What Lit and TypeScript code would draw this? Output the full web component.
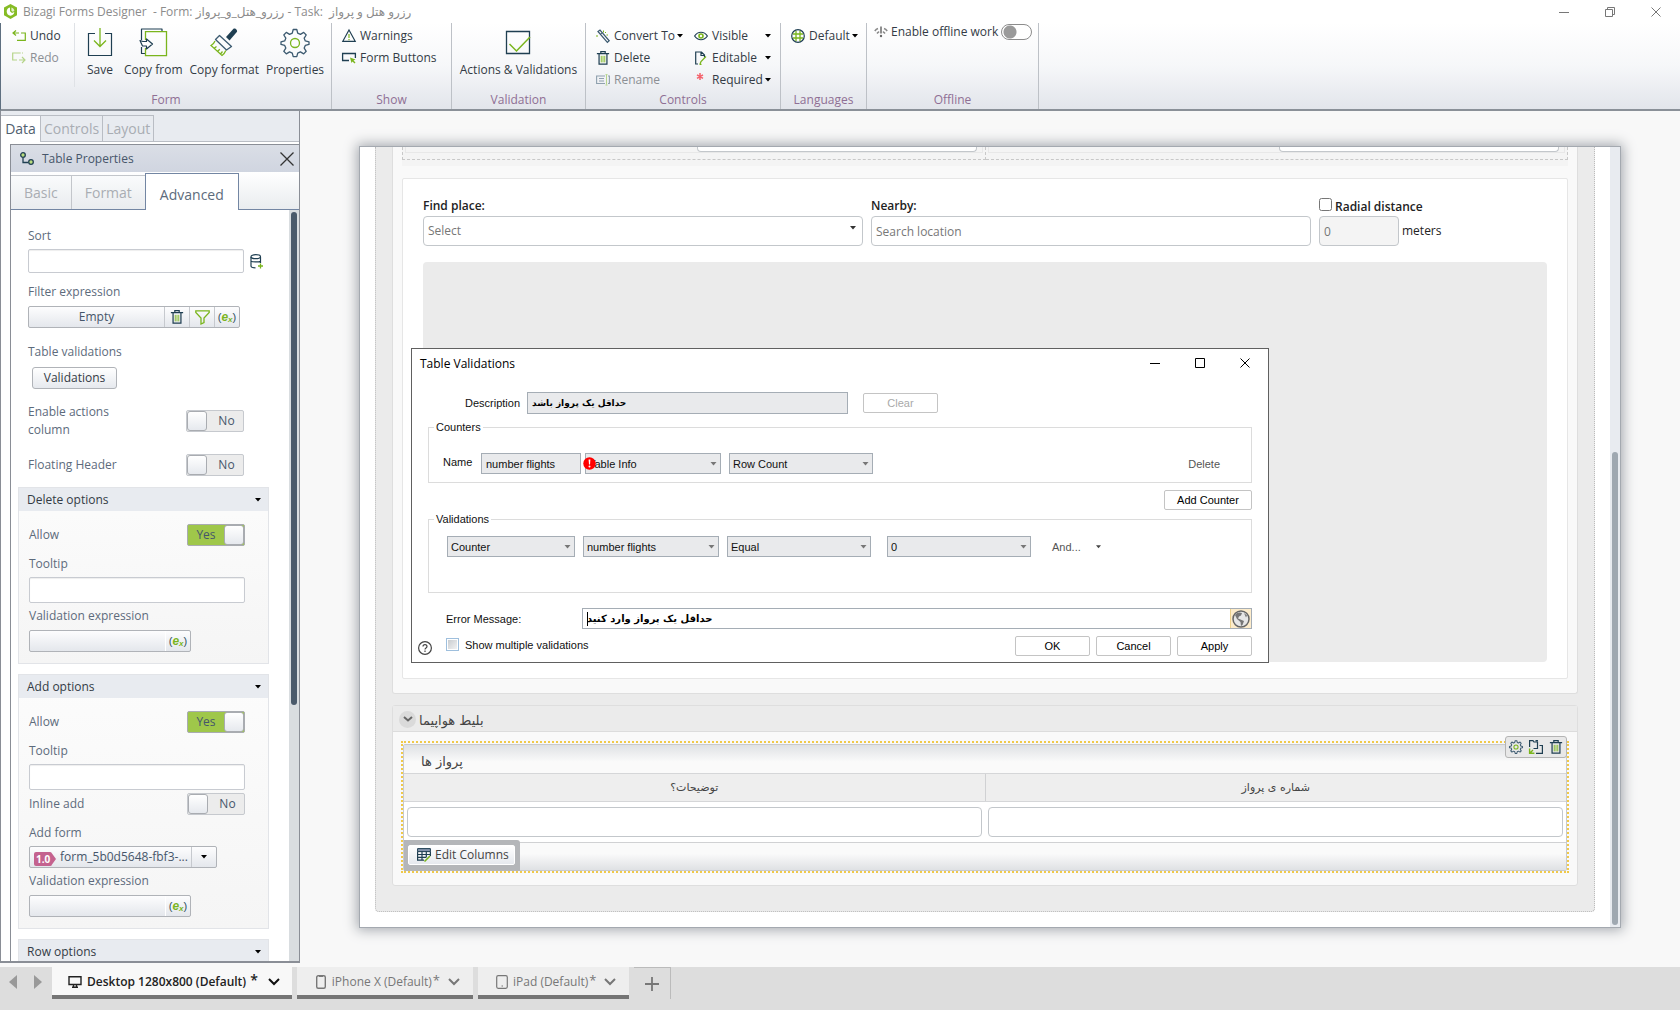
import { LitElement, html, svg, css, nothing } from "lit";
import { customElement } from "lit/decorators.js";

/* ---------- shared styles ---------- */

const base = css`
  *, *::before, *::after { box-sizing: border-box; }
  :host {
    display: block;
    font: 12px/18px "Open Sans", "Noto Sans", "DejaVu Sans", sans-serif;
    color: #333b45;
  }
  button, input, select { font: inherit; color: inherit; margin: 0; border-radius: 0; }
  button { background: none; border: 0; padding: 0; white-space: nowrap; }
  svg { display: block; flex: none; fill: none; overflow: visible; }
`;

/* ---------- icons ---------- */

const NAVY = "#1f3f52";
const GREEN = "#7ab51d";

const caret = (color = "#000", w = 6) => html`
  <svg width=${w} height="4" viewBox="0 0 6 4" aria-hidden="true"><path d="M0 0h6L3 3.6z" fill=${color} /></svg>`;

const trash = (size = 16) => html`
  <svg width=${size} height=${size} viewBox="0 0 16 16" aria-hidden="true">
    <path d="M5.500 2.500V.7h5v1.800M1 3h14M3.500 3v12h9V3" stroke=${NAVY} stroke-width="1.400" />
    <path d="M6 5.500v7.500M8 5.500v7.500M10 5.500v7.500" stroke=${GREEN} />
  </svg>`;

const GEAR = "M13.200 1.500h3.600l.9 3.700 2.700 1.200 3.300-2 2.500 2.600-2 3.200 1.100 2.700 3.700.9v2.600l-3.700 1-1.100 2.700 2 3.200-2.500 2.600-3.300-2-2.700 1.200-.9 3.600h-3.600l-.9-3.600-2.700-1.200-3.300 2-2.500-2.600 2-3.200-1.100-2.700-3.700-1v-2.600l3.700-.9 1.100-2.700-2-3.200 2.500-2.600 3.300 2 2.700-1.200z";

const gear = (size: number, width: number) => html`
  <svg width=${size} height=${size} viewBox="0 0 30 30" aria-hidden="true">
    <path d=${GEAR} stroke="#3c5a70" stroke-width=${width} stroke-linejoin="round" />
    <circle cx="15" cy="15" r="4.500" stroke=${GREEN} stroke-width=${width} />
  </svg>`;

const chevron = (color: string) => html`
  <svg width="12" height="8" viewBox="0 0 12 8" aria-hidden="true"><path d="M1 1l5 5 5-5" stroke=${color} stroke-width="2" /></svg>`;

const icons = {
  logo: html`<svg width="13" height="15" viewBox="0 0 13 15" aria-hidden="true">
    <path d="M6.500 0L13 3.600v7.600L6.500 15 0 11.200V3.600z" fill="#86bc25" />
    <path d="M6 3.400C3.700 3.900 2.700 5.600 2.700 7.600c0 2.300 1.600 4.100 3.800 4.100 2.100 0 3.600-1.500 3.800-3.600L8 9 6 7.200z" fill="#fff" />
    <path d="M7.400 3.400v3.300l1.200 1 1.800-.8c-.2-1.900-1.300-3.200-3-3.500z" fill="#fff" opacity=".75" /></svg>`,
  undo: html`<svg width="14" height="12" viewBox="0 0 14 12" aria-hidden="true">
    <path d="M4 .5L1 3l3 2.500M1 3h6M9 3h4.300v7.300H5" stroke=${GREEN} stroke-width="1.200" /></svg>`,
  redo: html`<svg width="14" height="12" viewBox="0 0 14 12" aria-hidden="true">
    <path d="M10 5l3 3-3 3M13 8H7M5 8H.7V1h8M10 1h1" stroke="#b5d48a" stroke-width="1.200" /></svg>`,
  save: html`<svg width="28" height="30" viewBox="0 0 28 30" aria-hidden="true">
    <path d="M9 5.500H2.500v22h23v-22H19" stroke=${NAVY} stroke-width="1.200" />
    <path d="M14 0v18M8 12.500l6 6 6-6" stroke=${GREEN} stroke-width="1.300" /></svg>`,
  copyFrom: html`<svg width="28" height="30" viewBox="0 0 28 30" aria-hidden="true">
    <path d="M23 4V1H2.500v11M2.500 19v6.500H6" stroke=${NAVY} stroke-width="1.200" stroke-linejoin="round" />
    <path d="M6.500 12V3.600h21v24h-21V20" stroke=${GREEN} stroke-width="1.300" />
    <path d="M1 12.500l2.500 5.500h4v3l6-5-6-5v2.500H4z" stroke=${NAVY} stroke-width="1.200" stroke-linejoin="round" fill="#fff" /></svg>`,
  brush: html`<svg width="28" height="30" viewBox="0 0 28 30" aria-hidden="true">
    <path d="M16 9L23.500.8c1.500-1.300 4.500 1.500 3.300 3.200L19.500 12.500z" fill=${NAVY} />
    <path d="M9.500 7.500l12 11-5 3.500L5.500 11.500z" stroke="#3c5a70" stroke-width="1.300" stroke-linejoin="round" />
    <path d="M5 13c-.8 2-2 3.500-4 4.500l11 10c1.500-1 3-3 3.800-5M4 20.500l2.500-2M7.500 23.500l2.300-2.300M10.500 26l2-2.500" stroke=${GREEN} stroke-width="1.300" /></svg>`,
  warning: html`<svg width="14" height="14" viewBox="0 0 14 14" aria-hidden="true">
    <path d="M7 1L13.200 12.300H.8z" stroke=${NAVY} stroke-width="1.200" />
    <path d="M7 5v4M7 10v1.300" stroke=${GREEN} stroke-width="1.200" /></svg>`,
  formButton: html`<svg width="14" height="12" viewBox="0 0 14 12" aria-hidden="true">
    <path d="M7 8.500H.6v-7h12.800V6" stroke=${NAVY} stroke-width="1.300" />
    <path d="M8 5.500l5.500 2-2 1 2 2-1 1-2-2-1 1.500z" fill=${GREEN} /></svg>`,
  check: html`<svg width="28" height="30" viewBox="0 0 28 30" aria-hidden="true">
    <path d="M2.500 3.500h23v22h-23z" stroke=${NAVY} stroke-width="1.300" />
    <path d="M5.500 16l7 7L26 9" stroke=${GREEN} stroke-width="1.500" /></svg>`,
  wand: html`<svg width="14" height="14" viewBox="0 0 14 14" aria-hidden="true">
    <path d="M2 2.500l2-1.500 9.200 10.800-1.800 1.500z" stroke="#3c5a70" stroke-width="1.200" />
    <path d="M4 5.500l2-1.500" stroke="#3c5a70" />
    <path d="M7.500 1.500v2M10 3l-1 1M1 6v2M10.500 6h1.500" stroke=${GREEN} /></svg>`,
  rename: html`<svg width="14" height="12" viewBox="0 0 14 12" aria-hidden="true">
    <path d="M9 2H.6v7.500H9M12 2h1.400v7.500H12M3 4.500h5M3 7h5" stroke="#8fa0ae" stroke-width="1.100" />
    <path d="M10.500 1v9.500M9.500.6h2M9.500 11h2" stroke="#b5d48a" /></svg>`,
  eye: html`<svg width="14" height="12" viewBox="0 0 14 12" aria-hidden="true">
    <path d="M.6 6C4 1 10 1 13.400 6 10 11 4 11 .6 6z" stroke=${NAVY} stroke-width="1.200" />
    <circle cx="7" cy="6" r="2" stroke=${GREEN} stroke-width="1.600" /></svg>`,
  edit: html`<svg width="14" height="14" viewBox="0 0 14 14" aria-hidden="true">
    <path d="M4 13H1.700V1H7.500l3 3v2.500M7 1v3.500h3.500" stroke=${NAVY} stroke-width="1.200" />
    <path d="M6 13l1-2.500 5-5M5.500 13.300h2" stroke=${GREEN} stroke-width="1.300" /></svg>`,
  star: html`<svg width="14" height="14" viewBox="0 0 14 14" aria-hidden="true">
    <path d="M6 0v7M3 1.800l6 3.500M9 1.800L3 5.300" stroke="#f4616b" stroke-width="1.500" /></svg>`,
  globe: html`<svg width="14" height="14" viewBox="0 0 14 14" aria-hidden="true">
    <circle cx="7" cy="7" r="6.300" stroke=${NAVY} stroke-width="1.200" />
    <path d="M5 2v10M9 2v10M2 5h10M2 9h10" stroke=${GREEN} stroke-width="1.300" /></svg>`,
  offline: html`<svg width="14" height="12" viewBox="0 0 14 12" aria-hidden="true">
    <path d="M.8 5c1-1.300 2-2 3.200-2.400M3 7.500C3.700 6.600 4.400 6 5.200 5.800M10 2.600c1.200.4 2.200 1.100 3.200 2.400M8.800 5.800c.8.2 1.500.8 2.200 1.700" stroke="#8a8a8a" stroke-width="1.600" />
    <path d="M7 .5v7" stroke="#6a6a6a" stroke-width="1.500" /><circle cx="7" cy="10" r="1.200" fill="#6a6a6a" /></svg>`,
  relation: html`<svg width="14" height="14" viewBox="0 0 14 14" aria-hidden="true">
    <circle cx="3" cy="3" r="2.300" stroke=${NAVY} stroke-width="1.300" fill="#b9dc7e" />
    <circle cx="11" cy="10" r="2.300" stroke=${NAVY} stroke-width="1.300" fill="#b9dc7e" />
    <path d="M3 6v4.500h5" stroke=${NAVY} stroke-width="1.300" /></svg>`,
  database: html`<svg width="14" height="15" viewBox="0 0 14 15" aria-hidden="true">
    <path d="M1 3v9c0 1 2 1.800 4.500 1.800M10.500 3v6M1 7.200c1 1 8 1 9.500 0" stroke=${NAVY} stroke-width="1.200" />
    <ellipse cx="5.750" cy="2.700" rx="4.750" ry="2" stroke=${NAVY} stroke-width="1.200" />
    <path d="M10.500 9.500v5M8 12h5" stroke=${GREEN} stroke-width="1.300" /></svg>`,
  funnel: html`<svg width="15" height="15" viewBox="0 0 15 15" aria-hidden="true">
    <path d="M.8.8h13.400v1.700L9 8v4.500l-3 1.500V8L.8 2.500z" stroke=${GREEN} stroke-width="1.300" /></svg>`,
  reorder: html`<svg width="14" height="14" viewBox="0 0 14 14" aria-hidden="true">
    <path d="M.6 7V.6H4L5 2h3.500v6.500H4.500M6.500.6h2.500M11 5.500h2.400v7.800H7M11 5.500h-.5" stroke=${NAVY} stroke-width="1.200" />
    <path d="M.6 8.500v4.800h4.800M1 13l3-3" stroke=${GREEN} stroke-width="1.400" /></svg>`,
  columns: html`<svg width="14" height="14" viewBox="0 0 14 14" aria-hidden="true">
    <path d="M.6.6h12.800v3H.6z" fill="#8494ad" stroke=${NAVY} />
    <path d="M.6 3.600v8.500H7M.6 6.500h12.800M.6 9.400H9M5 3.600v8.500M9.300 3.600v6M13.400 3.600V8" stroke=${NAVY} stroke-width="1.200" />
    <path d="M7.500 13.500L13 8" stroke=${GREEN} stroke-width="1.600" /></svg>`,
  close: html`<svg width="14" height="14" viewBox="0 0 14 14" aria-hidden="true">
    <path d="M.5.5l13 13M13.500.5l-13 13" stroke="#333" stroke-width="1.300" /></svg>`,
};

const windowGlyph = (kind: "min" | "max" | "restore" | "close") => {
  const paths = {
    min: svg`<path d="M0 5.500h10" />`,
    max: svg`<path d="M.5.5h9v9h-9z" />`,
    restore: svg`<path d="M.5 2.500h7v7h-7zM2.500 2.500v-2h7v7h-2" />`,
    close: svg`<path d="M.5.5l9 9M9.500.5l-9 9" />`,
  };
  return html`<svg width="10" height="10" viewBox="0 0 10 10" stroke="currentColor" aria-hidden="true">${paths[kind]}</svg>`;
};

/* ---------- title bar ---------- */

@customElement("title-bar")
class TitleBar extends LitElement {
  static styles = [base, css`
    .bar { display: flex; align-items: center; height: 23px; padding-right: 1px; color: #8c8c8c; background: #fff; }
    .logo { padding: 0 6px 0 4px; }
    .title { flex: 1; white-space: pre; font-size: 12px; }
    .win { display: grid; place-items: center; width: 46px; height: 20px; color: #777; }
  `];
  render() {
    return html`<header class="bar">
      <span class="logo">${icons.logo}</span>
      <span class="title"><bdi>Bizagi Forms Designer  - Form: </bdi><bdi>رزرو_هتل_و_پرواز</bdi><bdi> - Task:  </bdi><bdi>رزرو هتل و پرواز</bdi></span>
      <button class="win" aria-label="Minimize">${windowGlyph("min")}</button>
      <button class="win" aria-label="Restore">${windowGlyph("restore")}</button>
      <button class="win" aria-label="Close">${windowGlyph("close")}</button>
    </header>`;
  }
}

/* ---------- ribbon ---------- */

@customElement("ribbon-bar")
class RibbonBar extends LitElement {
  static styles = [base, css`
    .ribbon {
      display: flex; height: 88px;
      border-left: 1px solid #5e6f80; border-bottom: 2px solid #8a9098;
      background: linear-gradient(#fff, #f6f7f9 50%, #e2e5eb);
    }
    .group { display: flex; flex-direction: column; border-right: 1px solid #bdc1c7; }
    .tools { display: flex; flex: 1; }
    .caption { height: 18px; text-align: center; color: #8f6f94; }
    .col { display: flex; flex-direction: column; padding-top: 2px; }
    .small { display: flex; align-items: center; gap: 4px; height: 22px; }
    .small svg:last-child:not(:first-child) { margin-left: -2px; }
    .name { flex: 1; text-align: left; }
    .big { display: flex; flex-direction: column; align-items: center; gap: 3px; min-width: 34px; padding-top: 5px; }
    .off { color: #8c8f94; }
    .rule { width: 1px; margin-bottom: 4px; background: #dfe2e6; }
    .form { width: 331px; }
    .form .col { width: 73px; padding-left: 11px; }
    .bigs { display: flex; flex: 1; gap: 7px; padding-left: 8px; }
    .show { width: 120px; }
    .show .col { padding-left: 10px; }
    .validation { width: 134px; }
    .validation .tools { justify-content: center; }
    .controls { width: 195px; }
    .controls .col { padding: 2px 6px 0 10px; }
    .controls .rule + .col { padding: 2px 13px 0 8px; flex: 1; }
    .first { width: 100px; }
    .languages { width: 86px; }
    .languages .col { padding-left: 10px; }
    .offline { width: 172px; }
    .work { display: flex; align-items: center; gap: 3px; height: 18px; padding-left: 7px; white-space: nowrap; }
    .toggle {
      appearance: none; width: 31px; height: 16px; border: 1px solid #8c8c8c; border-radius: 8px;
      background: radial-gradient(circle at 8px 7px, #9a9a9a 6px, transparent 7px) #fff;
    }
  `];

  small(icon: unknown, name: string, drop = false, off = false) {
    return html`<button class="small ${off ? "off" : ""}">${icon}<span class="name">${name}</span>${drop ? caret() : nothing}</button>`;
  }
  big(icon: unknown, name: string) {
    return html`<button class="big">${icon}<span>${name}</span></button>`;
  }

  render() {
    return html`<nav class="ribbon" aria-label="Ribbon">
      <section class="group form">
        <div class="tools">
          <div class="col">${this.small(icons.undo, "Undo")}${this.small(icons.redo, "Redo", false, true)}</div>
          <span class="rule"></span>
          <div class="bigs">
            ${this.big(icons.save, "Save")}${this.big(icons.copyFrom, "Copy from")}
            ${this.big(icons.brush, "Copy format")}${this.big(gear(30, 1.3), "Properties")}
          </div>
        </div>
        <div class="caption">Form</div>
      </section>
      <section class="group show">
        <div class="tools"><div class="col">${this.small(icons.warning, "Warnings")}${this.small(icons.formButton, "Form Buttons")}</div></div>
        <div class="caption">Show</div>
      </section>
      <section class="group validation">
        <div class="tools">${this.big(icons.check, "Actions & Validations")}</div>
        <div class="caption">Validation</div>
      </section>
      <section class="group controls">
        <div class="tools">
          <div class="col first">
            ${this.small(icons.wand, "Convert To", true)}${this.small(trash(14), "Delete")}${this.small(icons.rename, "Rename", false, true)}
          </div>
          <span class="rule"></span>
          <div class="col">
            ${this.small(icons.eye, "Visible", true)}${this.small(icons.edit, "Editable", true)}${this.small(icons.star, "Required", true)}
          </div>
        </div>
        <div class="caption">Controls</div>
      </section>
      <section class="group languages">
        <div class="tools"><div class="col">${this.small(icons.globe, "Default", true)}</div></div>
        <div class="caption">Languages</div>
      </section>
      <section class="group offline">
        <div class="tools">
          <label class="work">${icons.offline}<span>Enable offline work</span><input class="toggle" type="checkbox" role="switch" /></label>
        </div>
        <div class="caption">Offline</div>
      </section>
    </nav>`;
  }
}

/* ---------- properties panel ---------- */

@customElement("properties-panel")
class PropertiesPanel extends LitElement {
  static styles = [base, css`
    :host { display: flex; flex-direction: column; color: #5d6b7c; background: #e8ebf0; border: solid #8a8e96; border-width: 0 1px 2px 1px; overflow: hidden; }
    .tabs { display: flex; height: 31px; padding-top: 4px; border-bottom: 1px solid #b9bdc4; font-size: 14px; background: #e8ebf0; flex: none; }
    .tab { height: 26px; padding: 0 3px; border: 1px solid #b9bdc4; border-left: 0; border-bottom: 0; color: #a9adb3; }
    .tab.on { height: 27px; width: 40px; padding: 0; color: #51606f; background: #fff; }
    .inner { flex: 1; display: flex; flex-direction: column; min-height: 0; border-left: 9px solid #fff; background: #fff; padding-top: 2px; }
    .frame { flex: 1; display: flex; flex-direction: column; min-height: 0; border-left: 1px solid #8a8e96; border-top: 1px solid #8a8e96; }
    .head { display: flex; align-items: center; height: 27px; padding: 0 5px 0 9px; gap: 8px; background: linear-gradient(#dadee6, #d0d5e0); color: #46566a; flex: none; }
    .head h2 { flex: 1; margin: 0; font: inherit; }
    .subtabs { display: flex; align-items: flex-end; height: 38px; font-size: 14px; background: linear-gradient(#fff, #e9ecef); border-bottom: 1px solid #7386a3; flex: none; }
    .sub { height: 34px; padding: 0 13px; border-right: 1px solid #c3c6cb; border-top: 1px solid #c3c6cb; color: #a9adb3; background: linear-gradient(#fafbfc, #e9ecef); }
    .sub:nth-child(2) { border-right: 0; }
    .sub.on { height: 37px; margin-bottom: -1px; padding: 5px 14px 0; border: 1px solid #7386a3; border-bottom: 0; background: #fff; color: #5d6b7c; }
    .scroll { flex: 1; min-height: 0; display: flex; overflow: hidden; }
    .content { flex: 1; min-width: 0; padding: 17px 20px 0 7px; overflow: hidden; }
    .track { width: 10px; background: #d9dde0; padding: 2px; flex: none; }
    .thumb { height: 66%; border-radius: 4px; background: #4a5a6b; }
    .general { padding: 0 25px 0 10px; }
    .lab { display: block; height: 18px; white-space: nowrap; }
    .text { display: block; width: 100%; height: 26px; border: 1px solid #c8cbd1; border-radius: 2px; background: #fff; box-shadow: inset 0 1px 1px #eee; }
    .pick { display: grid; grid-template-columns: 1fr 25px; align-items: center; justify-items: center; margin: 4px -25px 10px 0; }
    .pick .text { height: 24px; }
    .group { display: flex; height: 22px; border: 1px solid #b0b3b8; border-radius: 2px; background: linear-gradient(#fdfdfe, #e4e7ec); }
    .group button { display: grid; place-items: center; width: 25px; border-left: 1px solid #c6c9ce; }
    .group .wide { flex: 1; border: 0; color: #46566a; }
    .filter { width: 212px; margin: 5px 0 15px; }
    .expr { width: 162px; margin-top: 5px; }
    .expr button { border-left-color: #fff; }
    .plain { display: block; width: 85px; height: 22px; margin: 6px 0 14px 4px; border: 1px solid #b0b3b8; border-radius: 3px; background: linear-gradient(#fff, #e6e9ee); color: #333b45; }
    .row { display: flex; align-items: center; justify-content: space-between; min-height: 22px; }
    .two { width: 90px; }
    .gap { margin-top: 15px; }
    .switch {
      appearance: none; display: flex; align-items: center; width: 58px; height: 22px; margin: 0;
      border: 1px solid #c6c9ce; border-radius: 2px; background: #ececec; flex: none; color: #46566a;
    }
    .switch::before { content: ""; width: 20px; height: 20px; border: 1px solid #a9acb1; border-radius: 3px; background: linear-gradient(#fff, #e6e9ee); }
    .switch::after { content: "No"; flex: 1; padding-left: 3px; text-align: center; }
    .switch:checked { flex-direction: row-reverse; background: #9fc74a; border-color: #a9acb1; }
    .switch:checked::after { content: "Yes"; padding: 0; }
    .section { margin-top: 10px; border: 1px solid #e2e4e8; background: linear-gradient(#fcfcfc, #f5f5f5); }
    .general + .section { margin-top: 11px; }
    .bar { display: flex; align-items: center; justify-content: space-between; width: 100%; height: 23px; padding: 0 7px 0 8px; background: #e8ebf0; color: #333b45; }
    .body { padding: 13px 23px 11px 10px; }
    .tight { margin-top: 4px; }
    .space { margin-top: 9px; }
    .near { margin-top: 3px; }
    .combo { width: 188px; margin-top: 4px; color: #46566a; }
    .combo .wide { display: flex; align-items: center; gap: 4px; padding-left: 4px; min-width: 0; }
    .combo .wide span { overflow: hidden; text-overflow: ellipsis; }
    .ver { margin-top: 4px; }
    .ex { font: italic bold 12px/18px "Liberation Sans", sans-serif; color: #2f4f63; }
    .ex b { color: #7ab51d; }
    .ex sub { font-size: 8px; line-height: 8px; vertical-align: -1px; color: #7ab51d; }
    .ex i { font: 11px/18px "Liberation Sans", sans-serif; }
  `];

  ex = html`<span class="ex"><i>(</i><b>e</b><sub>x</sub><i>)</i></span>`;

  toggle(id: string, on: boolean) {
    return html`<input class="switch" id=${id} type="checkbox" role="switch" .checked=${on} />`;
  }
  expression(label: string) {
    return html`
      <span class="lab tight">${label}</span>
      <div class="group expr"><button class="wide" aria-label=${label}></button><button aria-label="Edit expression">${this.ex}</button></div>`;
  }
  options(key: string, title: string, extra: unknown = nothing) {
    return html`<section class="section">
      <button class="bar">${title}${caret()}</button>
      <div class="body">
        <div class="row"><label for="${key}-allow">Allow</label>${this.toggle(`${key}-allow`, true)}</div>
        <label class="lab space" for="${key}-tip">Tooltip</label>
        <input class="text tight" id="${key}-tip" type="text" />
        ${extra}
        ${this.expression("Validation expression")}
      </div>
    </section>`;
  }

  render() {
    return html`
      <div class="tabs"><button class="tab on">Data</button><button class="tab">Controls</button><button class="tab">Layout</button></div>
      <div class="inner"><div class="frame">
        <div class="head">${icons.relation}<h2>Table Properties</h2><button aria-label="Close panel">${icons.close}</button></div>
        <div class="subtabs"><button class="sub">Basic</button><button class="sub">Format</button><button class="sub on">Advanced</button></div>
        <div class="scroll">
          <div class="content">
            <div class="general">
              <label class="lab" for="sort">Sort</label>
              <div class="pick"><input class="text" id="sort" type="text" /><button aria-label="Pick attribute">${icons.database}</button></div>
              <span class="lab">Filter expression</span>
              <div class="group filter">
                <button class="wide">Empty</button>
                <button aria-label="Delete filter">${trash(14)}</button>
                <button aria-label="Edit filter">${icons.funnel}</button>
                <button aria-label="Edit expression">${this.ex}</button>
              </div>
              <span class="lab">Table validations</span>
              <button class="plain">Validations</button>
              <div class="row"><label class="two" for="actions">Enable actions column</label>${this.toggle("actions", false)}</div>
              <div class="row gap"><label for="floating">Floating Header</label>${this.toggle("floating", false)}</div>
            </div>
            ${this.options("delete", "Delete options")}
            ${this.options("add", "Add options", html`
              <div class="row near"><label for="inline">Inline add</label>${this.toggle("inline", false)}</div>
              <span class="lab space">Add form</span>
              <div class="group combo">
                <button class="wide">
                  <svg class="ver" width="22" height="14" viewBox="0 0 22 14" aria-hidden="true">
                    <path d="M2 0h14a2 2 0 0 1 2 1.500L22 7l-4 5.500a2 2 0 0 1-2 1.500H2a2 2 0 0 1-2-2V2a2 2 0 0 1 2-2z" fill="#c4628f" />
                    <text x="2" y="11" font-size="10" font-weight="700" fill="#fff">1.0</text>
                  </svg><span>form_5b0d5648-fbf3-...</span>
                </button>
                <button aria-label="Choose form">${caret()}</button>
              </div>`)}
            <section class="section"><button class="bar">Row options${caret()}</button></section>
          </div>
          <div class="track"><div class="thumb"></div></div>
        </div>
      </div></div>`;
  }
}

/* ---------- form canvas ---------- */

@customElement("form-canvas")
class FormCanvas extends LitElement {
  static styles = [base, css`
    :host { display: flex; padding: 35px 59px 39px; background: #f8f8f8; color: #222; }
    .page { flex: 1; min-width: 0; display: flex; border: 1px solid #a4a9b0; background: #fff; box-shadow: 0 0 12px 2px #a4a8ae; }
    .form { flex: 1; min-width: 0; display: flex; flex-direction: column; margin: 0 15px 15px; padding: 0 16px 25px; border: 1px dotted #bbb; border-top: 0; border-radius: 0 0 4px 4px; background: #ebebeb; }
    .track { width: 10px; display: flex; flex-direction: column; justify-content: flex-end; padding: 2px; background: #e8ebf0; }
    .thumb { height: 61%; border-radius: 3px; background: #9fa8b1; }
    .box { border: 1px solid #dedede; border-radius: 3px; background: #f9f9f9; }
    .first { flex: 1; display: flex; flex-direction: column; border-top: 0; border-radius: 0 0 3px 3px; padding: 0 9px 14px 9px; }
    .sliver { height: 19px; padding-bottom: 6px; background: #f4f4f4; display: grid; grid-template-columns: 583fr 582fr; }
    .cell { border: 1px dashed #c8c8c8; border-top: 0; display: flex; justify-content: flex-end; height: 13px; padding: 0 2px 0; }
    .cell + .cell { border-left: 0; }
    .slot { flex: 1; display: flex; justify-content: flex-end; height: 6px; border: 1px solid #e8e8e8; border-top: 0; padding-right: 5px; }
    .edge { width: 49%; height: 5px; border: 1px solid #c3c7cb; border-top: 0; border-radius: 0 0 4px 4px; background: #fff; }
    .card { flex: 1; display: flex; flex-direction: column; margin-top: 12px; padding: 18px 20px 16px 20px; border: 1px solid #e6e6e6; border-radius: 2px; background: #fff; }
    .fields { display: grid; grid-template-columns: 440fr 440fr 228fr; gap: 8px; }
    .lab { display: block; height: 19px; font-weight: 600; font-size: 12px; }
    .field { display: block; width: 100%; height: 30px; padding: 0 4px; border: 1px solid #c3c7cb; border-radius: 4px; background: #fff; color: #777; font-size: 12px; }
    .field::placeholder { color: #777; opacity: 1; }
    .drop { display: grid; }
    .drop > * { grid-area: 1 / 1; }
    .drop select { appearance: none; }
    .drop svg { justify-self: end; margin: 10px 7px 0 0; }
    .radial { display: flex; align-items: center; gap: 3px; }
    .radial input { width: 13px; height: 13px; margin-top: -4px; }
    .dist { display: flex; align-items: center; gap: 3px; }
    .dist .field { width: 80px; background: #f4f4f4; }
    .map { flex: 1; margin-top: 16px; border-radius: 4px; background: #ebebeb; }
    .second { margin-top: 11px; }
    .title { display: flex; align-items: center; gap: 3px; width: 100%; height: 26px; padding: 5px 0 0 6px; border-bottom: 1px solid #dcdcdc; background: #ebebeb; color: #444; font: 13px/20px "DejaVu Sans", sans-serif; }
    .dot { display: grid; place-items: center; width: 17px; height: 17px; margin-top: -4px; border-radius: 50%; background: #dadada; }
    .pad { padding: 9px 8px 12px; }
    .sel { position: relative; padding: 1px 0 0; border: 2px dotted #f0c94a; }
    .grid { border: 1px solid #c8cacd; border-radius: 2px; background: #fff; font-family: "DejaVu Sans", sans-serif; color: #444; }
    .cap { height: 29px; padding: 8px 17px 0; border-bottom: 1px solid #d5d6d8; background: linear-gradient(#dfe1e4, #fafafa 60%); font-size: 13px; }
    .table { width: 100%; border-collapse: collapse; table-layout: fixed; font-size: 11px; }
    .table th { height: 27px; padding: 2px 0 0; border-bottom: 1px solid #d5d6d8; background: #eee; font-weight: 400; }
    .table th + th { border-left: 1px solid #d0d1d3; }
    .table td { height: 41px; padding: 0 3px; }
    .foot { position: relative; height: 28px; border-top: 1px solid #d0d1d3; background: linear-gradient(#fafafa 40%, #dfe1e4); }
    .halo { position: absolute; left: 0; top: -3px; padding: 5px 5px 6px 4px; border-radius: 0 3px 0 0; background: #b4b6b9; }
    .editcols { display: flex; align-items: center; gap: 4px; height: 20px; padding: 0 5px 0 8px; border: 1px solid #fff; border-radius: 2px; background: linear-gradient(#fff, #e6e9ee); font-family: "Open Sans", sans-serif; color: #444; }
    .toolbar { position: absolute; right: 0; top: -7px; display: flex; gap: 6px; padding: 3px; border: 1px solid #b4b4b4; border-radius: 3px; background: #e8e8e8; }
  `];

  render() {
    return html`<main class="page">
      <div class="form">
        <section class="box first">
          <div class="sliver">
            <div class="cell"><div class="slot"><div class="edge"></div></div></div>
            <div class="cell"><div class="slot"><div class="edge"></div></div></div>
          </div>
          <div class="card">
            <div class="fields">
              <div>
                <label class="lab" for="place">Find place:</label>
                <div class="drop"><select class="field" id="place"><option>Select</option></select>${caret("#333")}</div>
              </div>
              <div>
                <label class="lab" for="near">Nearby:</label>
                <input class="field" id="near" type="text" placeholder="Search location" />
              </div>
              <div>
                <label class="lab radial"><input type="checkbox" />Radial distance</label>
                <label class="dist"><input class="field" type="text" value="0" disabled />meters</label>
              </div>
            </div>
            <div class="map"></div>
          </div>
        </section>
        <section class="box second">
          <button class="title"><span class="dot"><svg width="10" height="6" viewBox="0 0 10 6" aria-hidden="true"><path d="M1 1l4 3.500L9 1" stroke="#666" stroke-width="2" /></svg></span>بلیط هواپیما</button>
          <div class="pad"><div class="sel">
            <div class="grid">
              <div class="cap">پرواز ها</div>
              <table class="table">
                <thead><tr><th>توضیحات؟</th><th>شماره ی پرواز</th></tr></thead>
                <tbody><tr>
                  <td><input class="field" type="text" aria-label="توضیحات؟" /></td>
                  <td><input class="field" type="text" aria-label="شماره ی پرواز" /></td>
                </tr></tbody>
              </table>
              <div class="foot"><div class="halo"><button class="editcols">${icons.columns}Edit Columns</button></div></div>
            </div>
            <div class="toolbar">
              <button aria-label="Settings">${gear(14, 2.2)}</button>
              <button aria-label="Rearrange">${icons.reorder}</button>
              <button aria-label="Remove">${trash(14)}</button>
            </div>
          </div></div>
        </section>
      </div>
      <div class="track"><div class="thumb"></div></div>
    </main>`;
  }
}

/* ---------- validations dialog ---------- */

@customElement("validation-dialog")
class ValidationDialog extends LitElement {
  static styles = [base, css`
    :host { width: 858px; border: 1px solid #606060; background: #fff; color: #111; font: 11px/14px "Liberation Sans", "DejaVu Sans", sans-serif; }
    .head { display: flex; align-items: center; height: 30px; padding: 0 1px 0 8px; }
    .head h2 { flex: 1; margin: 0; font: 12px/18px "Open Sans", sans-serif; color: #000; }
    .win { display: grid; place-items: center; width: 45px; height: 28px; padding-bottom: 2px; color: #000; }
    .main { padding: 13px 16px 6px 16px; }
    .line { display: flex; align-items: center; }
    .ctl { height: 22px; padding: 0 4px; border: 1px solid #a5adb5; background: #e9eaec; }
    .fa { font: bold 10px/14px "DejaVu Sans", sans-serif; color: #000; }
    .desc .fa { font-size: 9px; }
    .btn { width: 75px; height: 20px; border: 1px solid #c4c4c4; border-radius: 2px; background: #fff; color: #000; }
    .btn:disabled { color: #a9a9a9; }
    .desc { padding-left: 37px; }
    .desc label { width: 57px; }
    .desc .ctl { width: 321px; margin: 0 15px 0 5px; }
    .desc .btn { margin-top: -1px; }
    .set { margin: 6px 0 0; padding: 19px 14px 8px; border: 1px solid #dcdcdc; min-width: 0; }
    .set legend { height: 14px; margin-left: -9px; padding: 0 2px; }
    .set .line { gap: 8px; }
    .set .ctl, .sel .ctl { height: 21px; }
    .name { width: 30px; margin-top: -4px; }
    .num { width: 100px; margin-right: -4px; }
    .sel { position: relative; display: grid; align-items: center; }
    .sel > select, .sel > svg { grid-area: 1 / 1; }
    .sel > svg { justify-self: end; margin-right: 4px; }
    .sel select { appearance: none; padding: 0 3px; width: 100%; }
    .w128 { width: 128px; } .w136 { width: 136px; } .w144 { width: 144px; }
    .err { position: absolute; left: -2px; top: 4px; }
    .del { margin: 0 17px 0 auto; color: #555; }
    .add { display: flex; justify-content: flex-end; margin-top: 7px; }
    .add .btn { width: 88px; }
    .rules { margin-top: 2px; padding: 10px 14px 35px 18px; }
    .rules legend { margin-left: -13px; }
    .rules .w144 + .w144 { margin-left: 8px; }
    .and { display: flex; align-items: center; gap: 15px; margin-left: 13px; color: #555; }
    .msg { margin-top: 15px; padding-left: 18px; }
    .msg label { width: 136px; }
    .msg .box { position: relative; flex: 1; display: flex; height: 21px; border: 1px solid #a5adb5; }
    .msg input { flex: 1; border: 0; padding: 0 4px; background: #fff; outline: 0; }
    .cursor { position: absolute; left: 4px; top: 3px; width: 1px; height: 14px; background: #000; }
    .lang { display: grid; place-items: center; width: 21px; background: #fdeccb; border-left: 1px solid #ecd08c; }
    .foot { display: flex; align-items: center; gap: 6px; margin: 7px 0 0 -10px; }
    .multi { flex: 1; display: flex; align-items: center; gap: 6px; margin: -3px 0 0 8px; }
    .tick { appearance: none; width: 13px; height: 13px; border: 1px solid #9ebfdd; background: linear-gradient(135deg, #c4c8cc, #f6f6f6); box-shadow: inset 0 0 0 1px #fff; }
    .help { margin-top: 4px; }
  `];

  pick(id: string, label: string, value: string, width: string, extra: unknown = nothing) {
    return html`<span class="sel ${width}">
      <select class="ctl" id=${id} aria-label=${label}><option>${value}</option></select>
      ${caret("#777", 7)}${extra}</span>`;
  }

  render() {
    return html`<div role="dialog" aria-label="Table Validations">
      <div class="head"><h2>Table Validations</h2>
        <button class="win" aria-label="Minimize">${windowGlyph("min")}</button>
        <button class="win" aria-label="Maximize">${windowGlyph("max")}</button>
        <button class="win" aria-label="Close">${windowGlyph("close")}</button>
      </div>
      <div class="main">
        <div class="line desc">
          <label for="desc">Description</label>
          <input class="ctl fa" id="desc" type="text" value="حداقل یک پرواز باشد" />
          <button class="btn" disabled>Clear</button>
        </div>
        <fieldset class="set">
          <legend>Counters</legend>
          <div class="line">
            <label class="name" for="cname">Name</label>
            <input class="ctl num" id="cname" type="text" value="number flights" />
            ${this.pick("source", "Source", "Table Info", "w136", html`
              <svg class="err" width="13" height="13" viewBox="0 0 13 13" role="img" aria-label="Error">
                <circle cx="6.500" cy="6.500" r="6.200" fill="#f00" /><path d="M5.600 2.500h1.800L7 7.500H6z" fill="#fff" /><circle cx="6.500" cy="9.600" r="1" fill="#fff" />
              </svg>`)}
            ${this.pick("measure", "Measure", "Row Count", "w144")}
            <button class="del">Delete</button>
          </div>
        </fieldset>
        <div class="add"><button class="btn">Add Counter</button></div>
        <fieldset class="set rules">
          <legend>Validations</legend>
          <div class="line">
            ${this.pick("kind", "Kind", "Counter", "w128")}
            ${this.pick("counter", "Counter", "number flights", "w136")}
            ${this.pick("operator", "Operator", "Equal", "w144")}
            ${this.pick("value", "Value", "0", "w144")}
            <button class="and">And...${caret("#444", 5)}</button>
          </div>
        </fieldset>
        <div class="line msg">
          <label for="msg">Error Message:</label>
          <div class="box">
            <input class="fa" id="msg" type="text" value="حداقل یک پرواز وارد کنید" /><span class="cursor"></span>
            <button class="lang" aria-label="Translations">
              <svg width="18" height="18" viewBox="0 0 18 18" aria-hidden="true">
                <circle cx="9" cy="9" r="8" fill="#e6e6e6" stroke="#666" stroke-width="1.500" />
                <path d="M3 5c2-3 5-3 7-2l-1 2.500-2 1-1 2 2.500 1L12 11l-1.500 4-1.500 1-.5-4-3.500-3zM12 3l3 2.500-1 2z" fill="#777" />
              </svg>
            </button>
          </div>
        </div>
        <div class="foot">
          <button class="help" aria-label="Help"><svg width="14" height="14" viewBox="0 0 14 14" aria-hidden="true">
            <circle cx="7" cy="7" r="6.400" stroke="#444" stroke-width="1.200" />
            <path d="M5 5.500c0-2.600 4-2.600 4 0 0 1.500-2 1.500-2 3M7 9.500v1.500" stroke="#444" stroke-width="1.200" /></svg></button>
          <label class="multi"><input class="tick" type="checkbox" />Show multiple validations</label>
          <button class="btn">OK</button><button class="btn">Cancel</button><button class="btn">Apply</button>
        </div>
      </div>
    </div>`;
  }
}

/* ---------- device tabs ---------- */

@customElement("device-tabs")
class DeviceTabs extends LitElement {
  static styles = [base, css`
    .bar { display: flex; align-items: flex-start; gap: 5px; height: 43px; background: #ddd; }
    .nav { display: flex; align-items: center; gap: 17px; width: 47px; height: 29px; padding-left: 9px; }
    .tab { display: flex; align-items: center; height: 32px; padding: 2px 13px 0 18px; border-bottom: 4px solid #757575; background: #eee; color: #777; }
    .tab .name { margin-left: 5px; }
    .tab .mark { margin: -4px 8px 0 1px; font-size: 13px; }
    .tab.on { padding-left: 16px; padding-right: 12px; background: #f8f8f8; color: #222; font-weight: 600; }
    .tab.on .mark { margin: -4px 10px 0 4px; font-size: 14px; }
    .plus { display: grid; place-items: center; width: 37px; height: 32px; border: solid #bbb; border-width: 1px 1px 0 0; }
  `];

  tab(icon: unknown, name: string, on = false) {
    return html`<button class="tab ${on ? "on" : ""}">${icon}<span class="name">${name}</span><span class="mark">*</span>${chevron(on ? "#111" : "#777")}</button>`;
  }

  render() {
    return html`<footer class="bar">
      <div class="nav">
        <button aria-label="Previous"><svg width="8" height="14" viewBox="0 0 8 14" aria-hidden="true"><path d="M8 0v14L0 7z" fill="#999" /></svg></button>
        <button aria-label="Next"><svg width="8" height="14" viewBox="0 0 8 14" aria-hidden="true"><path d="M0 0v14l8-7z" fill="#999" /></svg></button>
      </div>
      ${this.tab(html`<svg width="14" height="12" viewBox="0 0 14 12" aria-hidden="true"><path d="M1 .7h12v7.800H1zM4 11.300h6M5.500 8.500v2.500M8.500 8.500v2.500" stroke="#222" stroke-width="1.400" /></svg>`, "Desktop 1280x800 (Default)", true)}
      ${this.tab(html`<svg width="12" height="14" viewBox="0 0 12 14" aria-hidden="true"><rect x="1.700" y=".7" width="8.600" height="12.600" rx="1.500" stroke="#777" stroke-width="1.400" /><path d="M4 1h4v1H4z" fill="#777" /></svg>`, "iPhone X (Default)")}
      ${this.tab(html`<svg width="12" height="14" viewBox="0 0 12 14" aria-hidden="true"><rect x=".7" y=".7" width="10.600" height="12.600" rx="1.500" stroke="#777" stroke-width="1.200" /><path d="M5.500 11h1.500" stroke="#777" /></svg>`, "iPad (Default)")}
      <button class="plus" aria-label="Add device"><svg width="14" height="14" viewBox="0 0 14 14" aria-hidden="true"><path d="M7 0v14M0 7h14" stroke="#777" stroke-width="1.800" /></svg></button>
    </footer>`;
  }
}

/* ---------- application ---------- */

@customElement("app-root")
class AppRoot extends LitElement {
  static styles = [base, css`
    :host { display: flex; flex-direction: column; height: 100vh; background: #f8f8f8; overflow: hidden; }
    .work { position: relative; flex: 1; min-height: 0; display: flex; }
    .side { width: 300px; flex: none; margin-bottom: 4px; }
    .canvas { flex: 1; min-width: 0; }
    .dialog { position: absolute; left: 411px; top: 237px; }
  `];
  render() {
    return html`
      <title-bar></title-bar>
      <ribbon-bar></ribbon-bar>
      <div class="work">
        <properties-panel class="side"></properties-panel>
        <form-canvas class="canvas"></form-canvas>
        <validation-dialog class="dialog"></validation-dialog>
      </div>
      <device-tabs></device-tabs>`;
  }
}
